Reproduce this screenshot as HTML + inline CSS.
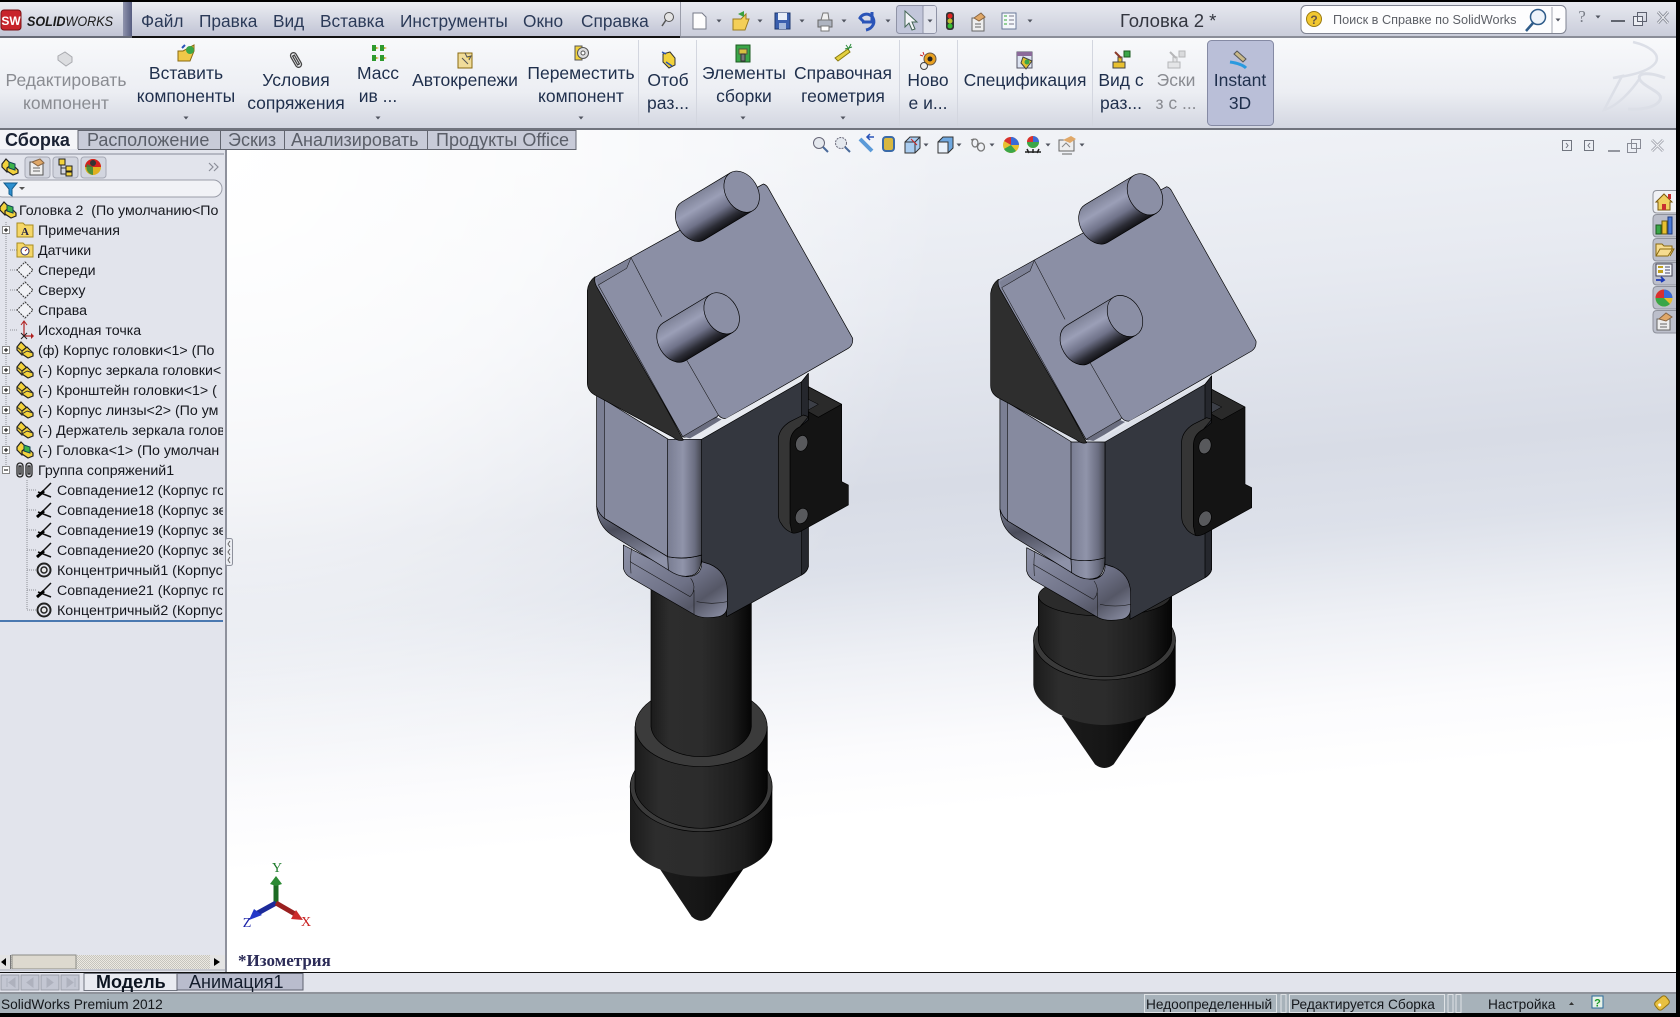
<!DOCTYPE html>
<html><head><meta charset="utf-8"><title>SolidWorks</title>
<style>
html,body{margin:0;padding:0;background:#000;overflow:hidden}
svg{display:block}
text{font-family:"Liberation Sans",sans-serif}
.m{font-size:17.3px;fill:#2b3a58}
.r{font-size:17.5px;fill:#1f2f4c;text-anchor:middle}
.g{font-size:17.5px;fill:#8a8c92;text-anchor:middle}
.tb{font-size:18px;fill:#5a5e68}
.tr{font-size:14.2px;fill:#16181e}
.st{font-size:13.7px;fill:#15181c}
</style></head><body>
<svg width="1680" height="1017" viewBox="0 0 1680 1017" xmlns="http://www.w3.org/2000/svg">
<defs>
<linearGradient id="title" x1="0" y1="0" x2="0" y2="1"><stop offset="0" stop-color="#eceef3"/><stop offset="1" stop-color="#bfc2d3"/></linearGradient>
<linearGradient id="title2" x1="0" y1="0" x2="0" y2="1"><stop offset="0" stop-color="#e9ebf1"/><stop offset="1" stop-color="#c8cbd9"/></linearGradient>
<linearGradient id="sepd" x1="0" y1="0" x2="1" y2="0"><stop offset="0" stop-color="#8f94ad"/><stop offset="1" stop-color="#565c80"/></linearGradient>
<linearGradient id="rib" x1="0" y1="0" x2="0" y2="1"><stop offset="0" stop-color="#f8f9fb"/><stop offset=".6" stop-color="#eceef3"/><stop offset="1" stop-color="#d3d6e1"/></linearGradient>
<linearGradient id="vp" gradientUnits="userSpaceOnUse" x1="900" y1="130" x2="978" y2="1000">
<stop offset="0" stop-color="#f1f3f7"/><stop offset=".2" stop-color="#e7eaf1"/><stop offset=".41" stop-color="#d8dce6"/><stop offset=".5" stop-color="#dde1ea"/><stop offset=".6" stop-color="#eef0f5"/><stop offset=".7" stop-color="#fbfbfd"/><stop offset=".78" stop-color="#ffffff"/></linearGradient>
<radialGradient id="vpw" gradientUnits="userSpaceOnUse" cx="226" cy="150" r="720"><stop offset="0" stop-color="#fff" stop-opacity="1"/><stop offset=".45" stop-color="#fff" stop-opacity=".7"/><stop offset="1" stop-color="#fff" stop-opacity="0"/></radialGradient>
<linearGradient id="cyl" x1="0" y1="0" x2="0" y2="1"><stop offset="0" stop-color="#7f8398"/><stop offset=".3" stop-color="#9b9fb7"/><stop offset=".6" stop-color="#70738a"/><stop offset=".85" stop-color="#2c2d36"/><stop offset="1" stop-color="#121216"/></linearGradient>
<linearGradient id="col" x1="0" y1="0" x2="1" y2="0"><stop offset="0" stop-color="#797d92"/><stop offset=".45" stop-color="#9094aa"/><stop offset=".8" stop-color="#6a6d80"/><stop offset="1" stop-color="#44464f"/></linearGradient>
<linearGradient id="fil" x1="0" y1="0" x2=".3" y2="1"><stop offset="0" stop-color="#7b7f94"/><stop offset=".4" stop-color="#4a4c5a"/><stop offset="1" stop-color="#8e92a8"/></linearGradient>
<linearGradient id="lip" x1="0" y1="0" x2="1" y2="1"><stop offset="0" stop-color="#8f93a9"/><stop offset=".55" stop-color="#6e7186"/><stop offset=".75" stop-color="#555766"/><stop offset="1" stop-color="#8f93a9"/></linearGradient>
<linearGradient id="bar" x1="0" y1="0" x2="1" y2="0"><stop offset="0" stop-color="#1b1b1b"/><stop offset=".18" stop-color="#2d2d2d"/><stop offset=".5" stop-color="#2c2c2c"/><stop offset=".8" stop-color="#1c1c1c"/><stop offset="1" stop-color="#050505"/></linearGradient>
<linearGradient id="cone" x1="0" y1="0" x2="1" y2="0"><stop offset="0" stop-color="#1b1b1b"/><stop offset=".5" stop-color="#161616"/><stop offset="1" stop-color="#060606"/></linearGradient>
<pattern id="dots" width="2" height="2" patternUnits="userSpaceOnUse"><rect width="2" height="2" fill="#ece9e2"/><rect width="1" height="1" fill="#c6c4bd"/><rect x="1" y="1" width="1" height="1" fill="#c6c4bd"/></pattern>

<g id="head" stroke-linejoin="round">
 <!-- right face -->
 <path d="M395 838L695 665L715 640V1220Q712 1235 695 1245L470 1370V1290Q470 1235 420 1213L395 1205Z" fill="#34373f" stroke="#000" stroke-width="2"/>
 <path d="M695 665L715 640V1220Q712 1235 695 1245Z" fill="#25272d" stroke="#000" stroke-width="2"/>
 <!-- bracket -->
 <path d="M715 680L815 733V965L835 975V1035L690 1115Q672 1122 666 1118L660 1090V850Q660 815 690 800L715 780Z" fill="#141414" stroke="#000" stroke-width="2"/>
 <path d="M715 680L815 733L745 772L715 755Z" fill="#2a2a2a" stroke="#000" stroke-width="2"/>
 <path d="M715 718L745 733L715 750Z" fill="#3c3f47" stroke="#000" stroke-width="1.500"/>
 <path d="M625 835Q628 805 660 785L700 765L715 770L690 800Q660 815 660 850V1090L666 1118Q650 1112 640 1100L630 1085Q625 1075 625 1060Z" fill="#353535" stroke="#000" stroke-width="2"/>
 <ellipse cx="695" cy="850" rx="18" ry="24" transform="rotate(15 695 850)" fill="#58595c" stroke="#000" stroke-width="2"/>
 <ellipse cx="695" cy="1068" rx="18" ry="24" transform="rotate(25 695 1068)" fill="#58595c" stroke="#000" stroke-width="2"/>
 <!-- lip -->
 <path d="M160 1155V1225Q165 1245 185 1255L375 1365Q400 1378 445 1370Q470 1365 472 1340V1290Q470 1235 420 1213L395 1205V1215Q390 1250 350 1250L320 1238Z" fill="url(#lip)" stroke="#000" stroke-width="2"/>
 <path d="M180 1205L360 1310M185 1165Q180 1190 183 1240M372 1290V1365M360 1310Q372 1300 372 1280Q370 1265 362 1255M380 1325Q425 1335 472 1325" fill="none" stroke="#111" stroke-width="1.6"/>
 <!-- left face -->
 <path d="M80 705L295 838L293 1190L103 1075Q85 1060 80 1040Z" fill="#868a9f" stroke="#000" stroke-width="2"/>
 <path d="M80 705L103 720V1075Q85 1060 80 1040Z" fill="#7b7f94" stroke="#000" stroke-width="1.6"/>
 <!-- bottom fillet -->
 <path d="M80 1040Q82 1095 125 1125L295 1230Q300 1210 293 1190L103 1075Q85 1060 80 1040Z" fill="url(#fil)" stroke="#000" stroke-width="2"/>
 <!-- elbow -->
 <path d="M293 1190Q340 1200 395 1185Q395 1235 370 1245Q335 1258 295 1230Z" fill="url(#col)" stroke="#000" stroke-width="2"/>
 <!-- column -->
 <path d="M293 838H395V1185Q345 1200 293 1190Z" fill="url(#col)" stroke="#000" stroke-width="2"/>
 <!-- wedge -->
 <path d="M52 392Q55 365 75 350L340 840Q325 845 310 832L80 708Q52 695 52 668Z" fill="#2e2e2e" stroke="#000" stroke-width="2"/>
 <!-- slope -->
 <path d="M75 352L580 72Q590 75 595 85L848 535Q850 555 835 565L470 775Q455 778 445 765L440 772L360 825Q350 835 338 830L80 380Q72 365 75 352Z" fill="#8b8fa5" stroke="#000" stroke-width="2"/>
 <path d="M85 375L78 358L183 293L170 325Z" fill="#7d8196"/>
 <path d="M338 830L440 772L455 778L395 815L360 835Z" fill="#6b6e80"/>
 <path d="M85 375L170 325L183 293L275 470M350 600L445 765M85 375L338 830M338 830L440 770" fill="none" stroke="#111" stroke-width="1.6"/>
 <path d="M395 818L700 648" stroke="#e6e8ee" stroke-width="3" fill="none"/>
 <!-- pins -->
 <g transform="translate(515 95) rotate(-31)"><path d="M-170 -66H0V66H-170A48 66 0 0 1-170 -66Z" fill="url(#cyl)" stroke="#000" stroke-width="2"/><ellipse rx="48" ry="66" fill="#8b8fa5" stroke="#000" stroke-width="2"/></g>
 <g transform="translate(455 460) rotate(-31)"><path d="M-165 -66H0V66H-165A48 66 0 0 1-165 -66Z" fill="url(#cyl)" stroke="#000" stroke-width="2"/><ellipse rx="48" ry="66" fill="#8b8fa5" stroke="#000" stroke-width="2"/></g>
</g>

<!-- small icons -->
<path id="dd" d="M-2.5 -1.5h5l-2.5 3z" fill="#50545f"/>
<g id="asmY"><path d="M-8 -3L-4 -8L1 -3V1L-3 5L-8 0Z" fill="#f2d23c" stroke="#222" stroke-width="1.2"/><path d="M-3 1L2 -3L8 3V6L3 8L-3 4Z" fill="#f2d23c" stroke="#222" stroke-width="1.2"/><path d="M-8 -3L-3 1V5M2 1L8 3M2 1L-3 4" fill="none" stroke="#333"/></g>
<g id="asmG"><path d="M-8 -3L-4 -8L1 -3V1L-3 5L-8 0Z" fill="#f2d23c" stroke="#222" stroke-width="1.2"/><path d="M-3 1L2 -3L8 3V6L3 8L-3 4Z" fill="#f2d23c" stroke="#222" stroke-width="1.2"/><path d="M-1 -5L5 -3L5 3L-1 1Z" fill="#3bb34a" stroke="#145"/></g>
<g id="pl"><path d="M0 -8L8 0L0 8L-8 0Z" fill="#fff" fill-opacity=".5" stroke="#333" stroke-dasharray="2 1"/></g>
<g id="mate"><path d="M-7 7L7 -7M-6 2L7 7" stroke="#111" stroke-width="1.5" fill="none"/><path d="M-7 7L0 1" stroke="#000" stroke-width="3"/></g>
<g id="conc"><circle r="6.5" fill="none" stroke="#222" stroke-width="2"/><circle r="3" fill="#e8e8e8" stroke="#222" stroke-width="1.5"/></g>
<g id="plus"><rect x="-3.5" y="-3.5" width="7" height="7" fill="#fff" stroke="#888"/><path d="M-2 0H2M0 -2V2" stroke="#000"/></g>
</defs>

<!-- base -->
<rect width="1680" height="1017" fill="#000"/>
<!-- viewport -->
<rect x="226" y="130" width="1450" height="843" fill="url(#vp)"/>
<rect x="226" y="130" width="1450" height="843" fill="url(#vpw)"/>

<!-- model 1 -->
<g transform="translate(570 160) scale(.33333)">
 <path d="M265 2120L365 2270Q393 2295 421 2270L525 2120Z" fill="url(#cone)"/>
 <path d="M180 1880V2040C185 2105 290 2150 393 2150C500 2150 600 2105 607 2040V1880Z" fill="url(#bar)"/>
 <ellipse cx="393.500" cy="1880" rx="213" ry="135" fill="#3a3a3a" stroke="#000" stroke-width="2"/>
 <path d="M195 1700V1885C200 1950 300 2005 393 2005C490 2005 590 1950 592 1885V1700Z" fill="url(#bar)" stroke="#000" stroke-width="2"/>
 <ellipse cx="393.500" cy="1700" rx="198" ry="120" fill="#3b3b3b" stroke="#000" stroke-width="2"/>
 <path d="M243 1280V1700C248 1750 320 1790 393 1790C470 1790 540 1750 544 1700V1280Z" fill="url(#bar)" stroke="#000" stroke-width="2"/>
 <use href="#head"/>
</g>
<!-- model 2 -->
<g transform="translate(973.33 162.67) scale(.33333)">
 <path d="M265 1660L365 1805Q393 1827 421 1805L520 1660Z" fill="url(#cone)"/>
 <path d="M180 1432V1567C185 1630 290 1687 393 1687C500 1687 600 1630 607 1567V1432Z" fill="url(#bar)"/>
 <ellipse cx="393.500" cy="1432" rx="213" ry="120" fill="#3a3a3a" stroke="#000" stroke-width="2"/>
 <path d="M195 1300V1432C200 1490 300 1542 393 1542C490 1542 590 1490 595 1432V1300Z" fill="url(#bar)" stroke="#000" stroke-width="2"/>
 <ellipse cx="393.500" cy="1300" rx="198" ry="60" fill="#2b2b2b" stroke="#000" stroke-width="2"/>
 <use href="#head"/>
</g>

<!-- triad -->
<g>
 <path d="M276 903V881" stroke="#1c6b22" stroke-width="5"/><path d="M276 876L282 884L276 886L270 884Z" fill="#2b8a33"/>
 <path d="M276 903L256 914" stroke="#1c2a9a" stroke-width="5"/><path d="M249 920L254 909L262 915Z" fill="#2438c8"/>
 <path d="M276 903L295 914" stroke="#9a2020" stroke-width="5"/><path d="M303 920L291 919L296 910Z" fill="#cc2a2a"/>
 <text x="277" y="872" text-anchor="middle" style="font:14px 'Liberation Serif',serif" fill="#1c7a2a">Y</text>
 <text x="247" y="927" text-anchor="middle" style="font:14px 'Liberation Serif',serif" fill="#1a22a8">Z</text>
 <text x="306" y="926" text-anchor="middle" style="font:14px 'Liberation Serif',serif" fill="#c82020">X</text>
</g>
<text x="238" y="966" style="font:bold 17px 'Liberation Serif',serif" fill="#2c2c58">*Изометрия</text>

<!-- left panel -->
<rect x="0" y="150" width="225" height="823" fill="#e2e4ec"/>
<rect x="225" y="130" width="2" height="843" fill="#8e919c"/>
<rect x="0" y="153" width="224" height="2" fill="#b4b7c2"/>
<rect x="25" y="157" width="25" height="21" rx="3" fill="#d2d5df" stroke="#a6a9b5"/>
<rect x="53" y="157" width="25" height="21" rx="3" fill="#d2d5df" stroke="#a6a9b5"/>
<rect x="81" y="157" width="25" height="21" rx="3" fill="#d2d5df" stroke="#a6a9b5"/>
<use href="#asmG" x="10" y="167"/>
<g transform="translate(37 168)"><rect x="-7" y="-6" width="13" height="13" fill="#eee" stroke="#555"/><path d="M-5 -6L3 -9L7 -5L1 -2Z" fill="#e0a868" stroke="#864"/><path d="M-4 0H3M-4 3H3" stroke="#666"/></g>
<g transform="translate(65 167)"><rect x="-6" y="-8" width="6" height="6" fill="#f2d23c" stroke="#222"/><rect x="1" y="-1" width="6" height="5" fill="#f2d23c" stroke="#222"/><rect x="1" y="5" width="6" height="4" fill="#f2d23c" stroke="#222"/><path d="M-4 -2V7H1M-4 1H1" fill="none" stroke="#333"/></g>
<g transform="translate(93 167)"><circle r="8" fill="#e0b020"/><path d="M-8 0A8 8 0 0 1 8 0Z" fill="#d42020"/><path d="M-6 -3A8 8 0 0 0 0 8V0Z" fill="#2a8a40" opacity=".8"/><circle cx="0" cy="-4" r="3" fill="#333"/></g>
<path d="M209 163l4 4-4 4M214 163l4 4-4 4" fill="none" stroke="#8b8e99" stroke-width="1.2"/>
<rect x="-6" y="180" width="228" height="17" rx="8.500" fill="#f1f2f6" stroke="#9a9da8"/>
<path d="M4 183H17L12 189V196L9 194V189Z" fill="#2c8fd0" stroke="#145c8c"/><path d="M19 187h6l-3 3z" fill="#555"/>

<!-- tree dots -->
<path d="M6 222V472M27 480V610M10 250H17M10 270H17M10 290H17M10 310H17M10 330H17M27 490H36M27 510H36M27 530H36M27 550H36M27 570H36M27 590H36M27 610H36" stroke="#8d8f96" stroke-dasharray="1 1" fill="none"/>
<use href="#asmG" x="8" y="210"/>
<use href="#plus" x="6" y="230"/><use href="#plus" x="6" y="350"/><use href="#plus" x="6" y="370"/><use href="#plus" x="6" y="390"/><use href="#plus" x="6" y="410"/><use href="#plus" x="6" y="430"/><use href="#plus" x="6" y="450"/>
<rect x="2.500" y="466.500" width="7" height="7" fill="#fff" stroke="#888"/><path d="M4 470H8" stroke="#000"/>
<g transform="translate(25 230)"><path d="M-8 -7H-2L0 -5H8V7H-8Z" fill="#f5d768" stroke="#a88b20"/><text y="5" text-anchor="middle" style="font:bold 11px 'Liberation Serif',serif" fill="#224">A</text></g>
<g transform="translate(25 250)"><path d="M-8 -7H-2L0 -5H8V7H-8Z" fill="#f5d768" stroke="#a88b20"/><circle cy="1" r="4" fill="#fff" stroke="#336"/><path d="M0 1L2 -1" stroke="#a22"/></g>
<use href="#pl" x="25" y="270"/><use href="#pl" x="25" y="290"/><use href="#pl" x="25" y="310"/>
<g transform="translate(25 330)"><path d="M-1 -8V6M-1 6H8" stroke="#b02020" stroke-width="1.2" fill="none"/><path d="M-4 -5L-1 -9L2 -5" fill="none" stroke="#b02020"/><path d="M6 3L9 6L6 9" fill="#b02020"/><path d="M-4 3L2 9M-4 9L2 3" stroke="#222"/></g>
<use href="#asmY" x="25" y="350"/><use href="#asmY" x="25" y="370"/><use href="#asmY" x="25" y="390"/><use href="#asmY" x="25" y="410"/><use href="#asmY" x="25" y="430"/><use href="#asmG" x="25" y="450"/>
<g transform="translate(25 470)" fill="none" stroke="#222" stroke-width="1.3"><rect x="-8" y="-7" width="6" height="14" rx="3"/><rect x="-6" y="-4" width="2" height="8"/><rect x="1" y="-7" width="6" height="14" rx="3"/><rect x="3" y="-4" width="2" height="8"/></g>
<use href="#mate" x="44" y="490"/><use href="#mate" x="44" y="510"/><use href="#mate" x="44" y="530"/><use href="#mate" x="44" y="550"/><use href="#conc" x="44" y="570"/><use href="#mate" x="44" y="590"/><use href="#conc" x="44" y="610"/>
<svg x="0" y="200" width="223" height="420" overflow="hidden">
<g class="tr">
<text class="tr" x="19" y="15">Головка 2 &#160;(По умолчанию&lt;По</text>
<text class="tr" x="38" y="35">Примечания</text>
<text class="tr" x="38" y="55">Датчики</text>
<text class="tr" x="38" y="75">Спереди</text>
<text class="tr" x="38" y="95">Сверху</text>
<text class="tr" x="38" y="115">Справа</text>
<text class="tr" x="38" y="135">Исходная точка</text>
<text class="tr" x="38" y="155">(ф) Корпус головки&lt;1&gt; (По</text>
<text class="tr" x="38" y="175">(-) Корпус зеркала головки&lt;</text>
<text class="tr" x="38" y="195">(-) Кронштейн головки&lt;1&gt; (</text>
<text class="tr" x="38" y="215">(-) Корпус линзы&lt;2&gt; (По ум</text>
<text class="tr" x="38" y="235">(-) Держатель зеркала голов</text>
<text class="tr" x="38" y="255">(-) Головка&lt;1&gt; (По умолчан</text>
<text class="tr" x="38" y="275">Группа сопряжений1</text>
<text class="tr" x="57" y="295">Совпадение12 (Корпус го</text>
<text class="tr" x="57" y="315">Совпадение18 (Корпус зе</text>
<text class="tr" x="57" y="335">Совпадение19 (Корпус зе</text>
<text class="tr" x="57" y="355">Совпадение20 (Корпус зе</text>
<text class="tr" x="57" y="375">Концентричный1 (Корпус</text>
<text class="tr" x="57" y="395">Совпадение21 (Корпус го</text>
<text class="tr" x="57" y="415">Концентричный2 (Корпус</text>
</g></svg>
<rect x="0" y="620" width="223" height="2" fill="#4a78b0"/>
<rect x="225.500" y="538.500" width="7" height="27" rx="2" fill="#eceef3" stroke="#8e919c"/>
<path d="M230 541l-2 3 2 3M230 549l-2 3 2 3M230 557l-2 3 2 3" fill="none" stroke="#666"/>

<!-- h scrollbar -->
<rect x="0" y="955" width="225" height="14" fill="url(#dots)"/>
<rect x="12" y="955" width="64" height="14" fill="#ddd9cf" stroke="#8a8a86"/>
<rect x="0" y="955" width="10" height="14" fill="#e4e4e4"/><path d="M6 958v8l-5-4z" fill="#000"/><rect x="10" y="955" width="1" height="14" fill="#777"/>
<rect x="210" y="955" width="15" height="14" fill="#e4e4e4"/><path d="M214 958v8l6-4z" fill="#000"/>
<rect x="0" y="969" width="225" height="2" fill="#c5c7cf"/>

<!-- bottom tabs bar -->
<rect x="0" y="972" width="1676" height="1.500" fill="#111"/>
<rect x="0" y="973" width="1676" height="20" fill="#e2e4ec"/>
<rect x="0" y="992" width="1676" height="2" fill="#8f939b"/>
<g fill="#c3c6d2" stroke="#9a9da8"><rect x="1" y="975" width="18" height="15"/><rect x="21" y="975" width="18" height="15"/><rect x="41" y="975" width="18" height="15"/><rect x="61" y="975" width="18" height="15"/></g>
<path d="M7 978v9M15 978l-6 4.500 6 4.500zM33 978l-6 4.500 6 4.500zM47 978l6 4.500-6 4.500zM67 978l6 4.500-6 4.500zM75 978v9" fill="#aeb1bd" stroke="#aeb1bd"/>
<rect x="84" y="973.500" width="93" height="17" fill="#e9ebf1" stroke="#70747f"/>
<rect x="177" y="973.500" width="126" height="16.500" fill="#b9bccd" stroke="#5e6270"/>
<text x="96" y="988" style="font:bold 18px 'Liberation Sans',sans-serif" fill="#0c1420">Модель</text>
<text x="189" y="988" style="font:18px 'Liberation Sans',sans-serif" fill="#131c2c">Анимация1</text>

<!-- status -->
<rect x="0" y="994" width="1676" height="19" fill="#a7b2ba"/>
<text class="st" x="1" y="1009">SolidWorks Premium 2012</text>
<rect x="1144.500" y="994.500" width="132" height="18" fill="none" stroke="#dfe3e6"/>
<text class="st" x="1146" y="1009">Недоопределенный</text>
<rect x="1281" y="994.500" width="5" height="18" fill="none" stroke="#dfe3e6"/>
<rect x="1289.500" y="994.500" width="155" height="18" fill="none" stroke="#dfe3e6"/>
<text class="st" x="1291" y="1009">Редактируется Сборка</text>
<rect x="1448" y="994.500" width="5" height="18" fill="none" stroke="#dfe3e6"/><rect x="1456" y="994.500" width="5" height="18" fill="none" stroke="#dfe3e6"/>
<text class="st" x="1488" y="1009">Настройка</text>
<path d="M1569 1005h5l-2.500-3z" fill="#333"/>
<rect x="1592" y="996" width="11" height="12" fill="#e8f2e8" stroke="#2a6a9a"/><text x="1597.500" y="1006.500" text-anchor="middle" style="font:bold 11px 'Liberation Sans',sans-serif" fill="#1a9a2a">?</text>
<g transform="translate(1662 1003) rotate(-40)"><rect x="-7" y="-5" width="14" height="10" rx="3" fill="#e8c040" stroke="#907010"/><circle cx="-3" r="1.500" fill="#fff"/></g>

<!-- top title bar -->
<rect x="0" y="0" width="1676" height="38" fill="url(#title2)"/>
<rect x="0" y="2" width="124" height="36" fill="url(#title)"/>
<rect x="123" y="2" width="9" height="35" fill="url(#sepd)"/>
<rect x="132" y="2" width="548" height="35" fill="url(#title)"/>
<rect x="0" y="0" width="1680" height="2" fill="#000"/>
<rect x="132" y="36" width="548" height="2" fill="#111"/>
<rect x="680" y="2" width="1" height="36" fill="#9a9daa"/>
<rect x="680" y="36" width="996" height="2" fill="#8a8d98"/>
<rect x="0" y="36" width="132" height="2" fill="#666a76"/>
<!-- logo -->
<rect x="1" y="10" width="20" height="20" rx="3" fill="#c8242b" stroke="#7a1216"/>
<text x="11" y="25" text-anchor="middle" style="font:bold 12px 'Liberation Sans',sans-serif" fill="#fff">SW</text>
<text x="27" y="26" style="font:italic bold 13.500px 'Liberation Sans',sans-serif" fill="#1a1a1a" textLength="86" lengthAdjust="spacingAndGlyphs">SOLID<tspan font-weight="normal">WORKS</tspan></text>
<!-- menu -->
<text class="m" x="141" y="27">Файл</text>
<text class="m" x="199" y="27">Правка</text>
<text class="m" x="273" y="27">Вид</text>
<text class="m" x="320" y="27">Вставка</text>
<text class="m" x="400" y="27">Инструменты</text>
<text class="m" x="523" y="27">Окно</text>
<text class="m" x="581" y="27">Справка</text>
<g transform="translate(668 20)"><circle cx="1" cy="-3" r="4.500" fill="#e4e4e4" stroke="#555"/><path d="M-2 0L-6 6" stroke="#555" stroke-width="1.500"/></g>
<!-- quick toolbar -->
<path d="M693 13H702L706 17V29H693Z" fill="#fdfdfd" stroke="#767a88"/><use href="#dd" x="719" y="21"/>
<path d="M733 19H741L746 14V19H749L745 30H733Z" fill="#f4cf58" stroke="#9a7b20"/><path d="M738 14l6-3v6z" fill="#3aa040"/><use href="#dd" x="760" y="21"/>
<rect x="775" y="13" width="15" height="16" fill="#3a5fae" stroke="#1e386e"/><rect x="778" y="13" width="9" height="7" fill="#e8eef8"/><rect x="779" y="23" width="7" height="6" fill="#a4b8dc"/><use href="#dd" x="802" y="21"/>
<g transform="translate(825 22)"><rect x="-7" y="-2" width="14" height="7" fill="#aeb4c0" stroke="#666"/><path d="M-4 -2L-2 -9H3L4 -2Z" fill="#f0f0f0" stroke="#777"/><rect x="-4" y="4" width="8" height="5" fill="#fff" stroke="#777"/></g><use href="#dd" x="844" y="21"/>
<path d="M872 12V22H862M864 22L860 18A7 7 0 0 1 873 25Q871 29 866 30" fill="none" stroke="#2a54b8" stroke-width="3"/><use href="#dd" x="888" y="21"/>
<rect x="896.500" y="5.500" width="40" height="28" rx="3" fill="#c2c6da" stroke="#8f93a6"/><rect x="923" y="6" width="13" height="27" rx="2" fill="#e1e3ec"/><line x1="923" x2="923" y1="6" y2="33" stroke="#8f93a6"/>
<path d="M905 11V27L909 23L912 30L915 29L912 22H917Z" fill="#f4f5f9" stroke="#465"/><use href="#dd" x="930" y="21"/>
<rect x="946" y="12" width="8" height="18" rx="3" fill="#333"/><circle cx="950" cy="16" r="2.500" fill="#d22"/><circle cx="950" cy="21" r="2.500" fill="#bb3"/><circle cx="950" cy="26" r="2.500" fill="#3b3"/>
<g transform="translate(978 22)"><rect x="-6" y="-4" width="12" height="13" fill="#eee" stroke="#666"/><path d="M-4 -4L3 -9L7 -5L1 -1Z" fill="#e0a868" stroke="#864"/><path d="M-3 2H3M-3 5H3" stroke="#666"/></g>
<g transform="translate(1009 21)"><rect x="-7" y="-8" width="14" height="16" fill="#f4f7fb" stroke="#6a7a9a"/><path d="M-5 -5H-2M-5 -1H-2M-5 3H-2" stroke="#3a3"/><path d="M0 -5H5M0 -1H5M0 3H5" stroke="#778"/></g><use href="#dd" x="1030" y="21"/>
<text x="1120" y="27" style="font:18.500px 'Liberation Sans',sans-serif" fill="#33363f">Головка 2 *</text>
<!-- search -->
<rect x="1301" y="5.500" width="265" height="28" rx="5" fill="#fdfdfe" stroke="#7f8391"/>
<circle cx="1314" cy="19" r="7.500" fill="#f2c830" stroke="#9a7a10"/><text x="1314" y="24" text-anchor="middle" style="font:bold 12px 'Liberation Sans',sans-serif" fill="#654">?</text>
<text x="1333" y="24" style="font:12.700px 'Liberation Sans',sans-serif" fill="#5e6168">Поиск в Справке по SolidWorks</text>
<circle cx="1538" cy="17" r="7.500" fill="#eef4fb" stroke="#2f5c8a" stroke-width="1.500"/><path d="M1533 23L1526 31" stroke="#2f5c8a" stroke-width="2.500"/>
<use href="#dd" x="1558" y="20"/><line x1="1552" x2="1552" y1="7" y2="33" stroke="#a3a6b2"/>
<text x="1582" y="22" text-anchor="middle" style="font:17px 'Liberation Serif',serif" fill="#7a7e88">?</text><use href="#dd" x="1598" y="17"/>
<rect x="1611" y="20" width="14" height="2" fill="#61656f"/>
<g fill="none" stroke="#5e6270"><rect x="1633.500" y="16.500" width="9" height="9" fill="#eceef3"/><rect x="1637.500" y="12.500" width="9" height="9"/></g>
<path d="M1658 12L1668 23M1668 12L1658 23" stroke="#8d919c" stroke-width="3" fill="none"/><path d="M1658 12L1668 23M1668 12L1658 23" stroke="#eef0f4" stroke-width="1" fill="none"/>

<!-- ribbon -->
<rect x="0" y="38" width="1676" height="90" fill="url(#rib)"/>
<rect x="0" y="128" width="1676" height="2" fill="#70737d"/>
<!-- DS mark -->
<path d="M1633 42C1650 46 1660 54 1656 62C1650 72 1628 76 1613 78L1622 76L1604 110C1618 106 1632 90 1640 78" fill="none" stroke="#dcdfe7" stroke-width="2.500"/>
<path d="M1665 78C1650 72 1636 72 1640 80C1645 88 1664 92 1660 100C1656 108 1640 110 1628 109" fill="none" stroke="#dcdfe7" stroke-width="3"/>
<g stroke="#d3d6df"><line x1="638.500" x2="638.500" y1="40" y2="126"/><line x1="696.500" x2="696.500" y1="40" y2="126"/><line x1="899.500" x2="899.500" y1="40" y2="126"/><line x1="957.500" x2="957.500" y1="40" y2="126"/><line x1="1092.500" x2="1092.500" y1="40" y2="126"/></g>
<rect x="1207.500" y="40.500" width="66" height="85" rx="4" fill="#babfd8" stroke="#858aa4"/>

<text class="g" x="66" y="86">Редактировать</text><text class="g" x="66" y="109">компонент</text>
<text class="r" x="186" y="79">Вставить</text><text class="r" x="186" y="102">компоненты</text>
<text class="r" x="296" y="86">Условия</text><text class="r" x="296" y="109">сопряжения</text>
<text class="r" x="378" y="79">Масс</text><text class="r" x="378" y="102">ив ...</text>
<text class="r" x="465" y="86">Автокрепежи</text>
<text class="r" x="581" y="79">Переместить</text><text class="r" x="581" y="102">компонент</text>
<text class="r" x="668" y="86">Отоб</text><text class="r" x="668" y="109">раз...</text>
<text class="r" x="744" y="79">Элементы</text><text class="r" x="744" y="102">сборки</text>
<text class="r" x="843" y="79">Справочная</text><text class="r" x="843" y="102">геометрия</text>
<text class="r" x="928" y="86">Ново</text><text class="r" x="928" y="109">е и...</text>
<text class="r" x="1025" y="86">Спецификация</text>
<text class="r" x="1121" y="86">Вид с</text><text class="r" x="1121" y="109">раз...</text>
<text class="g" x="1176" y="86">Эски</text><text class="g" x="1176" y="109">з с ...</text>
<text class="r" x="1240" y="86">Instant</text><text class="r" x="1240" y="109">3D</text>
<use href="#dd" x="186" y="118"/><use href="#dd" x="378" y="118"/><use href="#dd" x="581" y="118"/><use href="#dd" x="743" y="118"/><use href="#dd" x="843" y="118"/>

<!-- ribbon icons -->
<g transform="translate(65 59)"><path d="M-7 -3L0 -7L7 -2V3L1 7L-7 1Z" fill="#dcdde0" stroke="#a8a9ae"/></g>
<g transform="translate(186 53)"><path d="M-8 -2H-3L8 -8V-2L4 8H-8Z" fill="#f0c848" stroke="#8a6a10"/><circle cx="4" cy="-3" r="4" fill="#3aa648"/><path d="M-4 -5L-1 -8" stroke="#2a54b8" stroke-width="2"/></g>
<g transform="translate(296 60) rotate(-30)" fill="none" stroke="#444" stroke-width="1.300"><rect x="-3" y="-8" width="6" height="16" rx="3"/><rect x="-1" y="-5" width="2" height="10"/></g>
<g transform="translate(378 53)" fill="#2e9a2e"><rect x="-6" y="-8" width="4" height="6"/><rect x="2" y="-8" width="4" height="6"/><rect x="-6" y="2" width="4" height="6"/><rect x="2" y="2" width="4" height="6"/><path d="M-2 -6l3 1-3 1zM6 -6l3 1-3 1zM-2 4l3 1-3 1zM6 4l3 1-3 1z" fill="#c0a020"/></g>
<g transform="translate(465 60)"><rect x="-7" y="-7" width="14" height="15" fill="#f0dc9a" stroke="#8a6a10"/><path d="M-3 -2L3 4M0 -7L2 -3L6 -4L4 0" stroke="#555" fill="#e8c030"/></g>
<g transform="translate(581 53)"><path d="M-6 -7H1V7H-6Z" fill="#f2d23c" stroke="#555"/><circle cx="2" r="5.500" fill="#ddd" stroke="#555"/><circle cx="2" r="2" fill="#fff" stroke="#555"/></g>
<g transform="translate(668 60)"><path d="M-5 -6L2 -8L7 -2V5L1 8L-5 2Z" fill="#f2d23c" stroke="#333"/><path d="M-6 -8l4 2M-2 2L4 6" stroke="#2a54b8" stroke-width="1.500"/></g>
<g transform="translate(743 53)"><rect x="-7" y="-8" width="14" height="17" fill="#3aa648" stroke="#1c5a20"/><rect x="-4" y="-4" width="8" height="5" fill="#d8c040" stroke="#554"/><rect x="-2" y="1" width="4" height="7" fill="#777" stroke="#333"/></g>
<g transform="translate(843 53)"><path d="M-8 5L5 -4L7 -1L-5 8Z" fill="#e4d040" stroke="#8a7a10"/><path d="M3 -8L6 -4M8 -9L5 -3M2 -4L9 -6" stroke="#2a8a3a"/></g>
<g transform="translate(928 60)"><circle cx="2" cy="-1" r="6" fill="#e8a020" stroke="#654"/><circle cx="2" cy="-1" r="2.500" fill="#222"/><circle cx="-4" cy="6" r="3.500" fill="#eee" stroke="#444"/><path d="M-5 -8l1 3M-8 -5l3 1" stroke="#c22"/></g>
<g transform="translate(1025 60)"><rect x="-8" y="-8" width="15" height="16" fill="#dde4f2" stroke="#556"/><rect x="-8" y="-8" width="15" height="4" fill="#8b6a9a"/><path d="M-2 -3L7 1L1 9L-4 3Z" fill="#e0c030" stroke="#444"/><circle cx="2" cy="2" r="2.500" fill="#3aa648"/></g>
<g transform="translate(1121 60)"><path d="M-8 8V2H4V8ZM-3 2V-3H1V2Z" fill="#e8c030" stroke="#444"/><path d="M-6 -8L0 -2" stroke="#8b3a2a" stroke-width="2"/><rect x="3" y="-9" width="6" height="6" fill="#3aa648" stroke="#1c5a20"/></g>
<g transform="translate(1176 60)" opacity=".35"><path d="M-8 8V2H4V8ZM-3 2V-3H1V2Z" fill="#ccc" stroke="#444"/><path d="M-6 -8L0 -2" stroke="#444" stroke-width="2"/><rect x="3" y="-9" width="6" height="6" fill="#aaa" stroke="#444"/></g>
<g transform="translate(1240 60)"><path d="M-3 -9L6 -1L3 2L-6 -6Z" fill="#c8b888" stroke="#555"/><path d="M-10 2C-3 3 3 5 6 8" stroke="#2a9adf" stroke-width="3" fill="none"/></g>

<!-- command tabs -->
<rect x="0" y="130" width="78" height="20" fill="#f4f5f8"/>
<rect x="78" y="130.500" width="498" height="19" fill="#c8cbd8" stroke="#62656f"/>
<rect x="0" y="149" width="78" height="1" fill="#e2e4ec"/>
<g stroke="#62656f"><line x1="220.500" x2="220.500" y1="131" y2="149"/><line x1="284.500" x2="284.500" y1="131" y2="149"/><line x1="427.500" x2="427.500" y1="131" y2="149"/></g>
<text x="5" y="146" style="font:bold 18px 'Liberation Sans',sans-serif" fill="#1a2233">Сборка</text>
<text class="tb" x="87" y="146">Расположение</text>
<text class="tb" x="228" y="146">Эскиз</text>
<text class="tb" x="291" y="146">Анализировать</text>
<text class="tb" x="436" y="146">Продукты Office</text>

<!-- heads-up toolbar -->
<g fill="none" stroke="#667">
 <circle cx="819" cy="143" r="5.500" fill="#e4e8ee"/><path d="M823 147L828 152" stroke="#4a6a9a" stroke-width="2"/>
 <circle cx="841" cy="143" r="5.500" fill="#e4e8ee" stroke-dasharray="2 1"/><path d="M845 147L850 152" stroke="#4a6a9a" stroke-width="2"/>
</g>
<path d="M860 139L872 151" stroke="#5a9ad8" stroke-width="4"/><path d="M868 137H874M870 134L867 137L870 140" fill="none" stroke="#2a54b8" stroke-width="1.500"/>
<rect x="883" y="137" width="11" height="14" rx="3" fill="#d8b840" stroke="#3a6aa8" stroke-width="2"/>
<g transform="translate(912 145)"><path d="M-7 -3L-2 -8H8V3L3 8H-7Z" fill="#aacdf0" stroke="#333"/><path d="M-7 -3H3V8M3 -3L8 -8" fill="none" stroke="#333"/><path d="M-1 -6L5 0" stroke="#c22"/></g><use href="#dd" x="926" y="145"/>
<g transform="translate(945 145)"><path d="M-7 -3L-2 -8H8V3L3 8H-7Z" fill="#6fa8e0" stroke="#333"/><path d="M-7 -3H3V8H-7Z" fill="#eaf2fb" stroke="#333"/></g><use href="#dd" x="959" y="145"/>
<g fill="none" stroke="#777" stroke-width="1.300"><ellipse cx="975" cy="143" rx="3" ry="4"/><ellipse cx="981" cy="147" rx="3.500" ry="4"/><path d="M977 144L979 145M971 140L974 139"/></g><use href="#dd" x="992" y="145"/>
<g transform="translate(1011 145)"><circle r="8" fill="#e8c030"/><path d="M-8 0A8 8 0 0 1 0 -8V0Z" fill="#d83030" transform="rotate(30)"/><path d="M0 0L-7 4A8 8 0 0 0 5 6Z" fill="#3aa648"/><path d="M0 0L0 -8A8 8 0 0 1 8 0Z" fill="#3a6ad8"/></g>
<g transform="translate(1033 144)"><circle cy="-2" r="6" fill="#e8c030"/><path d="M-6 -2A6 6 0 0 1 0 -8V-2Z" fill="#d83030"/><path d="M0 -2V-8A6 6 0 0 1 6 -2Z" fill="#3a6ad8"/><path d="M-6 -2A6 6 0 0 0 6 -2Z" fill="#3aa648"/><path d="M-8 8L8 8M-6 5L-4 9M0 5V9M6 5L4 9" stroke="#222" stroke-width="1.500"/></g><use href="#dd" x="1048" y="145"/>
<g transform="translate(1067 145)"><rect x="-8" y="-5" width="15" height="11" fill="#eee" stroke="#666"/><path d="M-4 -5L4 -9L9 -6L3 -2Z" fill="#e0a868"/><path d="M-5 9H5" stroke="#666"/><path d="M-5 2L-1 -2L3 2" stroke="#888" fill="none"/></g><use href="#dd" x="1082" y="145"/>

<!-- panel controls -->
<g fill="none" stroke="#71757f"><rect x="1562.500" y="140.500" width="9" height="10"/><rect x="1584.500" y="140.500" width="9" height="10"/><path d="M1566 143L1568 145.500L1566 148M1590 143L1588 145.500L1590 148"/></g>
<rect x="1608" y="150" width="12" height="2" fill="#93969f"/>
<g fill="none" stroke="#888b95"><rect x="1627.500" y="143.500" width="9" height="9"/><rect x="1631.500" y="139.500" width="9" height="9"/></g>
<path d="M1652 140L1663 151M1663 140L1652 151" stroke="#a9acb5" stroke-width="3" fill="none"/><path d="M1652 140L1663 151M1663 140L1652 151" stroke="#f2f3f6" stroke-width="1" fill="none"/>

<!-- right tabs -->
<g stroke="#8f929c">
<path d="M1676 190.500H1657Q1653 190.500 1653 194.500V209Q1653 213 1657 213H1676" fill="#f0f1f5"/>
<path d="M1676 214.500H1657Q1653 214.500 1653 218.500V233Q1653 237 1657 237H1676" fill="#bcbfcb"/>
<path d="M1676 238.500H1657Q1653 238.500 1653 242.500V257Q1653 261 1657 261H1676" fill="#bcbfcb"/>
<path d="M1676 262.500H1657Q1653 262.500 1653 266.500V281Q1653 285 1657 285H1676" fill="#bcbfcb"/>
<path d="M1676 286.500H1657Q1653 286.500 1653 290.500V305Q1653 309 1657 309H1676" fill="#bcbfcb"/>
<path d="M1676 310.500H1657Q1653 310.500 1653 314.500V329Q1653 333 1657 333H1676" fill="#bcbfcb"/>
</g>
<g transform="translate(1664 202)"><path d="M-8 0L0 -8L8 0H6V8H-6V0Z" fill="#f0d060" stroke="#7a5a10"/><rect x="-2" y="2" width="4" height="6" fill="#c83030"/><rect x="4" y="-8" width="3" height="5" fill="#c83030"/></g>
<g transform="translate(1664 226)"><rect x="-8" y="-1" width="5" height="9" fill="#3aa648" stroke="#1c5a20"/><rect x="-2" y="-5" width="5" height="13" fill="#e8c030" stroke="#6a5a10"/><rect x="4" y="-9" width="4" height="17" fill="#4a7ad8" stroke="#1c3a80"/></g>
<path d="M1656 258V246H1662L1664 248H1672V252L1668 258ZM1656 258L1660 251H1674L1670 258" fill="#f6dc90" stroke="#8a6a10" transform="translate(0 -2)"/>
<g transform="translate(1664 272)"><rect x="-8" y="-8" width="16" height="12" fill="#f4f6fb" stroke="#445"/><rect x="-6" y="-6" width="5" height="2" fill="#c0a020"/><rect x="-6" y="-2" width="5" height="3" fill="#c0a020"/><path d="M1 -5H6M1 -2H6M1 1H6" stroke="#446"/><path d="M-8 8H-1M-3 5L0 8L-3 10" fill="none" stroke="#1c3ab8" stroke-width="1.800"/></g>
<g transform="translate(1664 298)"><circle r="8.500" fill="#e8c030"/><path d="M-8.500 0A8.500 8.500 0 0 1 0 -8.500V0Z" fill="#d83030"/><path d="M0 0V-8.500A8.500 8.500 0 0 1 8.500 0Z" fill="#3a6ad8"/><path d="M-8.500 0A8.500 8.500 0 0 0 6 6L0 0Z" fill="#3aa648"/></g>
<g transform="translate(1664 322)"><rect x="-7" y="-3" width="13" height="11" fill="#eee" stroke="#666"/><path d="M-5 -3L2 -9L8 -5L2 -1Z" fill="#e0a868" stroke="#864"/><path d="M-4 2H3M-4 5H3" stroke="#666"/></g>

<!-- black edges -->
<rect x="1676" y="0" width="4" height="1017" fill="#000"/>
<rect x="0" y="1013" width="1680" height="4" fill="#000"/>
</svg>
</body></html>
